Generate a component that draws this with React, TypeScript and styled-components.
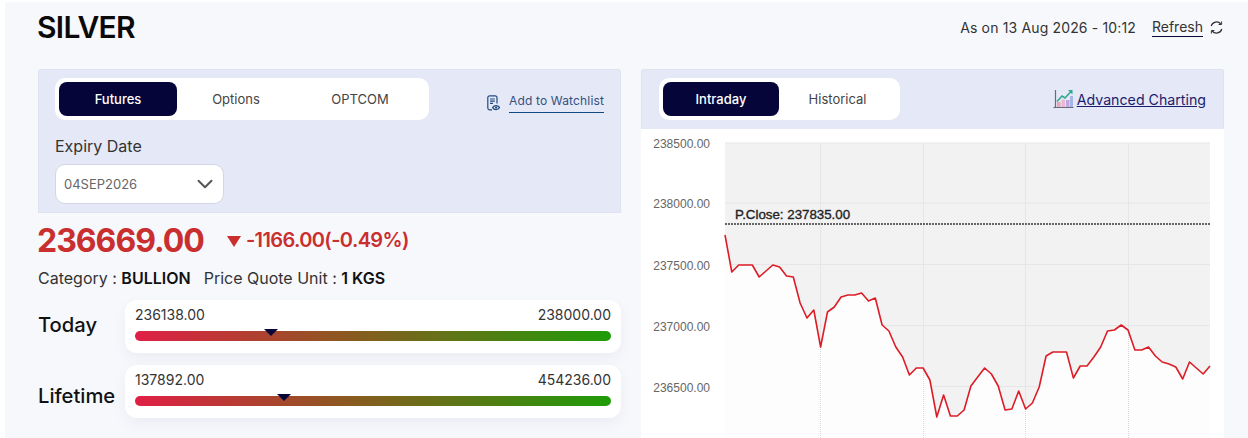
import React from "react";
import styled, { createGlobalStyle } from "styled-components";
import { ChevronDown } from "lucide-react";

const GlobalStyle = createGlobalStyle`
  html, body {
    margin: 0;
    background: #fff;
    font-family: "Inter", "Liberation Sans", sans-serif;
  }
  * { box-sizing: border-box; }
`;

// y values of the intraday line, one every 6.83px starting at the plot's left edge
const LINE_Y = [
  235, 272, 265, 265, 265, 277, 271, 265, 267, 276, 277, 303, 318, 310, 347, 312, 307, 297, 295, 295,
  293, 301, 298, 325, 331, 347, 357, 375, 368, 368, 380, 417, 395, 416, 416, 410, 386, 377, 368, 374,
  386, 410, 409, 391, 409, 403, 387, 356, 352, 352, 352, 378, 366, 366, 357, 347, 331, 330, 325, 330,
  350, 350, 347, 356, 362, 364, 367, 379, 362, 368, 374, 366,
];

const PLOT = { left: 725, right: 1210, top: 143, bottom: 438 };
const STEP = (PLOT.right - PLOT.left) / (LINE_Y.length - 1);
const linePoints = LINE_Y.map((y, i) => `${(PLOT.left + i * STEP).toFixed(1)},${y}`).join(" ");
const areaPoints = `${PLOT.left},${PLOT.bottom} ${linePoints} ${PLOT.right},${PLOT.bottom}`;

const Y_AXIS = [
  { label: "238500.00", y: 143 },
  { label: "238000.00", y: 203 },
  { label: "237500.00", y: 264.5 },
  { label: "237000.00", y: 325.5 },
  { label: "236500.00", y: 386.5 },
];
const X_GRID = [820.5, 923.5, 1025.5, 1128.5];

const CURRENT = 236669;

const WatchIcon = () => (
  <svg width="13" height="16" viewBox="0 0 13 16" fill="none" stroke="#1f4a80" strokeWidth="1.2">
    <path d="M5 14.8H2.6A1.8 1.8 0 0 1 .8 13V2.6A1.8 1.8 0 0 1 2.6.8h5.6A1.8 1.8 0 0 1 10 2.6V8.5" />
    <path d="M3 4h4.8M3 6.2h4.8M3 8.4h3" />
    <path d="M5.6 12.6c1.6-2.6 5.4-2.6 7 0-1.6 2.6-5.4 2.6-7 0z" fill="#e5e8f6" />
    <circle cx="9.1" cy="12.6" r="1.1" fill="#1f4a80" stroke="none" />
  </svg>
);

const ChartIcon = () => (
  <svg width="21" height="20" viewBox="0 0 21 20" fill="none">
    <rect x="4" y="13" width="3.5" height="5" fill="#eba4b8" />
    <rect x="8.5" y="10.5" width="3.5" height="7.5" fill="#e8b7d0" />
    <rect x="13" y="11" width="3.5" height="7" fill="#b9a9e0" />
    <rect x="17" y="7" width="3" height="11" fill="#a9b4e8" />
    <path d="M2.5 1v17.5H20.5" stroke="#6a6a78" strokeWidth="1.2" />
    <path d="M.5 18.5h2" stroke="#6a6a78" strokeWidth="1.2" />
    <path d="M4 12.5 9 7l3 2 6-6.5" stroke="#2fa98c" strokeWidth="1.6" />
    <path d="M15 1h4.5v4.5z" fill="#2fa98c" />
  </svg>
);

const RefreshIcon = () => (
  <svg width="15" height="15" viewBox="0 0 15 15" fill="none" stroke="#333" strokeWidth="1.2">
    <path d="M2.2 6a5.5 5.5 0 0 1 9.6-2" />
    <path d="M12.8 9a5.5 5.5 0 0 1-9.6 2" />
    <path d="M12.6 1.5v3h-3" strokeWidth="1" />
    <path d="M2.4 13.5v-3h3" strokeWidth="1" />
  </svg>
);

const RangeBar = ({ low, high, value }: { low: number; high: number; value: number }) => (
  <RangeCard>
    <RangeLabels>
      <span>{low.toFixed(2)}</span>
      <span>{high.toFixed(2)}</span>
    </RangeLabels>
    <Track>
      <Marker style={{ left: `${((value - low) / (high - low)) * 100}%` }} />
    </Track>
  </RangeCard>
);

const App = () => (
  <Shell>
    <GlobalStyle />
    <Header>
      <Title>SILVER</Title>
      <Status>
        <AsOn>As on 13 Aug 2026 - 10:12</AsOn>
        <RefreshLink>Refresh</RefreshLink>
        <RefreshIcon />
      </Status>
    </Header>
    <Columns>
      <div>
        <ControlPanel>
          <PanelTop>
            <Tabs $columns="118px 118px 130px">
              <Tab $active>Futures</Tab>
              <Tab>Options</Tab>
              <Tab>OPTCOM</Tab>
            </Tabs>
            <Watchlist>
              <WatchIcon />
              <WatchText>Add to Watchlist</WatchText>
            </Watchlist>
          </PanelTop>
          <FieldLabel>Expiry Date</FieldLabel>
          <Select>
            <span>04SEP2026</span>
            <ChevronDown size={26} color="#555" strokeWidth={1.8} />
          </Select>
        </ControlPanel>
        <PriceRow>
          <Price>236669.00</Price>
          <DownArrow />
          <Change>-1166.00(-0.49%)</Change>
        </PriceRow>
        <Meta>
          <span>
            Category : <b>BULLION</b>
          </span>
          <span>
            Price Quote Unit : <b>1 KGS</b>
          </span>
        </Meta>
        <RangeRow $gap="11px">
          <RangeTitle $shift="-4px">Today</RangeTitle>
          <RangeBar low={236138} high={238000} value={CURRENT} />
        </RangeRow>
        <RangeRow $gap="13px">
          <RangeTitle $shift="8px">Lifetime</RangeTitle>
          <RangeBar low={137892} high={454236} value={CURRENT} />
        </RangeRow>
      </div>
      <ChartColumn>
        <ChartHeader>
          <Tabs $columns="116px 117px">
            <Tab $active>Intraday</Tab>
            <Tab>Historical</Tab>
          </Tabs>
          <Charting>
            <ChartIcon />
            <ChartingText>Advanced Charting</ChartingText>
          </Charting>
        </ChartHeader>
        <ChartBody>
          <svg width="583" height="309" viewBox="641 129 583 309">
            <defs>
              <clipPath id="under-line">
                <polygon points={areaPoints} />
              </clipPath>
            </defs>
            <rect x={PLOT.left} y={PLOT.top} width={PLOT.right - PLOT.left} height={PLOT.bottom - PLOT.top} fill="#f2f2f2" />
            {Y_AXIS.map((a) => (
              <React.Fragment key={a.label}>
                <line x1={PLOT.left} x2={PLOT.right} y1={a.y} y2={a.y} stroke="#e6e6e6" />
                <AxisLabel x="710" y={a.y + 5} textAnchor="end">
                  {a.label}
                </AxisLabel>
              </React.Fragment>
            ))}
            {X_GRID.map((x) => (
              <line key={x} x1={x} x2={x} y1={PLOT.top} y2={PLOT.bottom} stroke="#e6e6e6" />
            ))}
            <polygon points={areaPoints} fill="#fdfdfd" />
            <g clipPath="url(#under-line)">
              {X_GRID.map((x) => (
                <line key={x} x1={x} x2={x} y1={PLOT.top} y2={PLOT.bottom} stroke="#d8d8d8" strokeDasharray="1 1" />
              ))}
            </g>
            <line x1={PLOT.left} x2={PLOT.right} y1="224" y2="224" stroke="#666" strokeWidth="2" strokeDasharray="2 1" />
            <CloseLabel x="735" y="218.5">P.Close: 237835.00</CloseLabel>
            <polyline points={linePoints} fill="none" stroke="#dc1c26" strokeWidth="1.6" strokeLinejoin="round" />
          </svg>
        </ChartBody>
      </ChartColumn>
    </Columns>
  </Shell>
);

const Shell = styled.div`
  margin: 2px 0 0 5px;
  height: 436px;
  padding-left: 33px;
  background: #f6f8fc;
  overflow: hidden;
  color: #222;
`;

const Header = styled.header`
  display: flex;
  align-items: center;
  justify-content: space-between;
  height: 67px;
  padding: 0 24px 17px 0;
`;

const Title = styled.h1`
  margin: 0 0 0 -1px;
  font-size: 30px;
  font-weight: 600;
  letter-spacing: -0.7px;
  color: #0a0a0a;
`;

const Status = styled.div`
  display: flex;
  align-items: center;
  font-size: 14px;
  color: #333;
  svg {
    margin-left: 6px;
  }
`;

const AsOn = styled.span`
  letter-spacing: 0.15px;
`;

const RefreshLink = styled.span`
  margin-left: 16px;
  padding-bottom: 1px;
  border-bottom: 1px solid #0a0a3a;
`;

const Columns = styled.div`
  display: grid;
  grid-template-columns: 583px 583px;
  gap: 20px;
`;

const ControlPanel = styled.section`
  height: 144px;
  padding: 8px 16px 0 16px;
  background: #e5e8f6;
  border: 1px solid #dfe2ef;
  border-radius: 3px 3px 0 0;
`;

const PanelTop = styled.div`
  display: flex;
  align-items: flex-start;
  justify-content: space-between;
`;

const Tabs = styled.div<{ $columns: string }>`
  display: grid;
  grid-template-columns: ${(p) => p.$columns};
  height: 42px;
  padding: 4px;
  background: #fff;
  border-radius: 10px;
`;

const Tab = styled.div<{ $active?: boolean }>`
  display: flex;
  align-items: center;
  justify-content: center;
  border-radius: 8px;
  font-size: 13px;
  font-weight: ${(p) => (p.$active ? 500 : 400)};
  color: ${(p) => (p.$active ? "#fff" : "#444")};
  background: ${(p) => (p.$active ? "#05053a" : "transparent")};
`;

const Watchlist = styled.div`
  display: flex;
  align-items: center;
  gap: 9px;
  margin-top: 14px;
`;

const WatchText = styled.span`
  padding-bottom: 4px;
  padding-top: 1px;
  font-size: 12px;
  font-weight: 400;
  line-height: 15px;
  letter-spacing: 0.15px;
  color: #33507f;
  border-bottom: 1px solid #114a80;
`;

const FieldLabel = styled.div`
  margin-top: 16px;
  font-size: 16px;
  line-height: 20px;
  color: #333;
`;

const Select = styled.div`
  display: flex;
  align-items: center;
  justify-content: space-between;
  width: 169px;
  height: 40px;
  margin-top: 8px;
  padding: 0 5px 0 8px;
  font-size: 13px;
  color: #666;
  background: #fff;
  border: 1px solid #d3d6e4;
  border-radius: 10px;
`;

const PriceRow = styled.div`
  display: flex;
  align-items: center;
  height: 54px;
`;

const Price = styled.span`
  font-size: 32px;
  font-weight: 700;
  letter-spacing: -1px;
  margin-left: -1px;
  color: #c92f2f;
`;

const DownArrow = styled.span`
  width: 0;
  height: 0;
  margin: 2px 5px 0 23px;
  border-left: 7px solid transparent;
  border-right: 7px solid transparent;
  border-top: 11px solid #c92f2f;
`;

const Change = styled.span`
  font-size: 20px;
  font-weight: 600;
  letter-spacing: -0.62px;
  color: #c92f2f;
`;

const Meta = styled.div`
  display: flex;
  gap: 13px;
  height: 22px;
  font-size: 16px;
  line-height: 22px;
  color: #333;
  b {
    font-weight: 600;
    color: #111;
  }
`;

const RangeRow = styled.div<{ $gap: string }>`
  display: grid;
  grid-template-columns: 87px 496px;
  align-items: center;
  height: 52px;
  margin-top: ${(p) => p.$gap};
`;

const RangeTitle = styled.div<{ $shift: string }>`
  font-size: 20.2px;
  font-weight: 500;
  color: #111;
  margin-top: ${(p) => p.$shift};
`;

const RangeCard = styled.div`
  height: 53px;
  padding: 6px 10px 0;
  background: #fff;
  border-radius: 12px;
  box-shadow: 0 6px 14px rgba(60, 70, 110, 0.06);
`;

const RangeLabels = styled.div`
  display: flex;
  justify-content: space-between;
  font-size: 14px;
  line-height: 18px;
  color: #333;
`;

const Track = styled.div`
  position: relative;
  height: 10px;
  margin-top: 7px;
  border-radius: 5px;
  background: linear-gradient(90deg, #e01f45 0%, #8a5a20 45%, #1f9c08 100%);
`;

const Marker = styled.span`
  position: absolute;
  top: -2px;
  width: 0;
  height: 0;
  margin-left: -7px;
  border-left: 7px solid transparent;
  border-right: 7px solid transparent;
  border-top: 7px solid #05053a;
`;

const ChartColumn = styled.section`
  display: flex;
  flex-direction: column;
`;

const ChartHeader = styled.div`
  display: flex;
  align-items: flex-start;
  justify-content: space-between;
  height: 60px;
  padding: 8px 17px 0 17px;
  background: #e5e8f6;
  border: 1px solid #dfe2ef;
  border-bottom: none;
  border-radius: 3px 3px 0 0;
`;

const Charting = styled.div`
  display: flex;
  align-items: center;
  gap: 3px;
  margin-top: 11px;
`;

const ChartingText = styled.span`
  font-size: 14.2px;
  color: #1c1c70;
  text-decoration: underline;
`;

const ChartBody = styled.div`
  height: 309px;
  background: #fff;
  svg {
    display: block;
  }
`;

const AxisLabel = styled.text`
  font-family: "Liberation Sans", Arial, sans-serif;
  font-size: 12px;
  fill: #666;
`;

const CloseLabel = styled.text`
  font-family: "Liberation Sans", Arial, sans-serif;
  font-size: 13.3px;
  fill: #222;
  stroke: #222;
  stroke-width: 0.35px;
`;

export default App;
